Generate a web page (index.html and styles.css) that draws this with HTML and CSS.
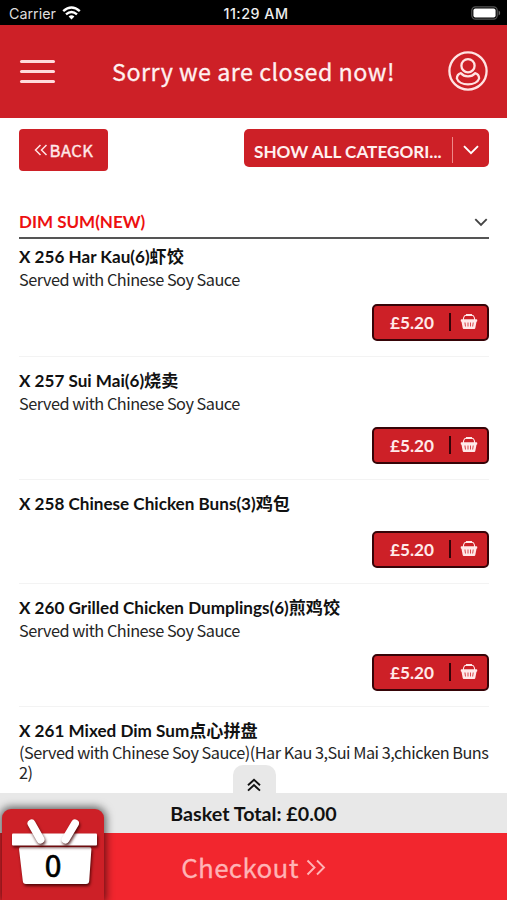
FILE: index.html
```html
<!DOCTYPE html>
<html lang="en">
<head>
<meta charset="utf-8">
<title>Menu</title>
<link rel="stylesheet" href="styles.css">
</head>
<body>
<svg class="defs" width="0" height="0">
  <symbol id="basket" viewBox="0 0 18 18">
    <path d="M3.500 7V5Q4 2.400 6.500 2h5Q14 2.400 14.500 5v2" fill="none" stroke="currentColor" stroke-width="1.100"/>
    <path d="M6 1h6v2H6z" fill="currentColor"/>
    <path fill-rule="evenodd" d="M1.500 6.300h15q.8 0 .8 1.200t-.8 1.200l-1.200 6.400q-.2.900-1 .9H3.700q-.8 0-1-.9L1.500 8.700q-.8 0-.8-1.200t.8-1.200zM4.500 9.500l.5 4h.8l-.4-4zM7.600 9.500v4h.8v-4zM10 9.500v4h.8v-4zM12.800 9.500l-.5 4h.8l.5-4z" fill="currentColor"/>
  </symbol>
</svg>
<div class="screen">
  <div class="status">
    <div class="carrier"><span>Carrier</span>
      <svg width="19" height="14" viewBox="0 0 19 14" fill="none" stroke="#fff" stroke-width="2.400"><path d="M1.200 5.200Q9.500-2.300 17.800 5.200"/><path d="M4 8.300q5.500-4.800 11 0"/><path d="M9.500 13.500 6.600 10.500q2.900-2.500 5.800 0z" fill="#fff" stroke="none"/></svg>
    </div>
    <div class="time">11:29 AM</div>
    <svg class="battery" width="30" height="14" viewBox="0 0 30 14"><rect x=".8" y=".8" width="25.400" height="12.400" rx="3.600" fill="none" stroke="#555" stroke-width="1.200"/><rect x="2.400" y="2.400" width="22.200" height="9.200" rx="2" fill="#fff"/><path d="M27.600 4.600q1.600.8 1.600 2.400t-1.600 2.400z" fill="#666"/></svg>
  </div>
  <header class="header">
    <div class="burger"><i></i><i></i><i></i></div>
    <h1 class="title">Sorry we are closed now!</h1>
    <svg class="user" width="40" height="40" viewBox="0 0 40 40" fill="none" stroke="#ffe3e3" stroke-width="2.300"><circle cx="20" cy="20" r="18.600"/><circle cx="20" cy="14.700" r="6.600"/><path d="M13 22.200C9.500 23.200 8.900 25.500 8.900 27.500 10 31.300 15 33.300 20 33.300s10-2 11.100-5.800c0-2-.6-4.300-4.100-5.300-1.700 2.200-4.300 3.100-7 3.100s-5.300-.9-7-3.100z" stroke-linejoin="round"/></svg>
  </header>
  <main class="main">
    <div class="toolbar">
      <div class="back"><svg width="14" height="12" viewBox="0 0 14 12" fill="none" stroke="#ffe3e3" stroke-width="1.500"><path d="M6.500 1 1.500 6l5 5M12.500 1l-5 5 5 5"/></svg><span>BACK</span></div>
      <div class="select"><span class="select-text">SHOW ALL CATEGORI...</span><svg class="select-arrow" width="16" height="10" viewBox="0 0 16 10" fill="none" stroke="#fff" stroke-width="1.900"><path d="M1 1.200l7 7 7-7"/></svg></div>
    </div>
    <div class="category"><span>DIM SUM(NEW)</span><svg width="14" height="9" viewBox="0 0 14 9" fill="none" stroke="#444" stroke-width="1.900"><path d="M1.300 1.200 7 6.900l5.700-5.700"/></svg></div>
    <section class="item first"><h2>X 256 Har Kau(6)虾饺</h2><p>Served with Chinese Soy Sauce</p><div class="price"><span>£5.20</span><svg class="basket"><use href="#basket"/></svg></div></section>
    <section class="item"><h2>X 257 Sui Mai(6)烧卖</h2><p>Served with Chinese Soy Sauce</p><div class="price"><span>£5.20</span><svg class="basket"><use href="#basket"/></svg></div></section>
    <section class="item"><h2>X 258 Chinese Chicken Buns(3)鸡包</h2><div class="price"><span>£5.20</span><svg class="basket"><use href="#basket"/></svg></div></section>
    <section class="item"><h2>X 260 Grilled Chicken Dumplings(6)煎鸡饺</h2><p>Served with Chinese Soy Sauce</p><div class="price"><span>£5.20</span><svg class="basket"><use href="#basket"/></svg></div></section>
    <section class="item last"><h2>X 261 Mixed Dim Sum点心拼盘</h2><p>(Served with Chinese Soy Sauce)(Har Kau 3,Sui Mai 3,chicken Buns 2)</p></section>
  </main>
  <footer class="footer">
    <div class="handle"><svg width="14" height="14" viewBox="0 0 14 14" fill="none" stroke="#111" stroke-width="1.900"><path d="M1 7.200l6-5.500 6 5.500M1 12.600l6-5.500 6 5.500"/></svg></div>
    <div class="total">Basket Total: £0.00</div>
    <div class="checkout"><span>Checkout</span><svg width="20" height="17" viewBox="0 0 20 17" fill="none" stroke="#ffb3b5" stroke-width="1.900"><path d="M1.500 1.500l7 7-7 7M11 1.500l7 7-7 7"/></svg></div>
    <div class="cart">
      <svg class="cart-art" width="102" height="92" viewBox="0 0 102 92">
        <path class="lift" fill="#fff" d="M20.500 38h69q2 0 1.900 2l-2.200 32q-.2 3-3.200 3H26q-3 0-3.200-3L19 40q0-2 1.500-2z"/>
        <rect class="lift" x="12" y="24.500" width="85" height="12" rx="1" fill="#fff"/>
        <path class="lift" stroke="#fff" stroke-width="8" stroke-linecap="round" d="M31.500 14.500l9 16"/>
        <path class="lift" stroke="#fff" stroke-width="8" stroke-linecap="round" d="M75 14.500l-9.500 16"/>
      </svg>
      <span class="count">0</span>
    </div>
  </footer>
</div>
</body>
</html>
```
FILE: styles.css
```css
* { box-sizing: border-box; }
body { margin: 0; background: #fff; font-family: Lato, "Noto Sans CJK SC", sans-serif; }
.defs { position: absolute; }
.screen { height: 900px; display: flex; flex-direction: column; overflow: hidden; position: relative; }
.status { height: 25px; flex: none; background: #000; color: #fff; display: grid; grid-template-columns: 1fr auto 1fr; align-items: center; padding: 1px 6px 0 9px; font-family: Inter, sans-serif; font-size: 14px; }
.carrier { display: flex; align-items: center; gap: 6px; color: #ddd; font-size: 14.300px; }
.time { font-weight: 500; font-size: 14.300px; letter-spacing: .5px; color: #eee; padding-left: 2px; }
.battery { justify-self: end; }
.header { height: 93px; flex: none; background: #cd2027; display: flex; align-items: center; justify-content: space-between; padding: 0 19px 2px 20px; }
.burger { width: 35px; display: flex; flex-direction: column; gap: 7px; margin-top: 2px; }
.burger i { height: 3px; border-radius: 2px; background: #ffdcdc; }
.title { margin: 0 0 0 4px; font: 400 23.300px/36px "Noto Sans CJK SC", sans-serif; letter-spacing: .480px; -webkit-text-stroke: .3px #fff0f0; color: #fff0f0; white-space: nowrap; }
.main { flex: 1; min-height: 0; overflow: hidden; padding: 11px 18px 0 19px; }
.toolbar { display: flex; justify-content: space-between; align-items: flex-start; height: 85px; }
.back { width: 89px; height: 42px; border-radius: 4px; background: #cd2027; color: #ffe8e8; display: flex; align-items: center; justify-content: center; gap: 2px; font: 400 16.500px/42px "Noto Sans CJK SC", sans-serif; letter-spacing: .5px; -webkit-text-stroke: .4px #ffe8e8; }
.select { width: 245px; height: 38px; border-radius: 5px; background: #cd2027; display: flex; align-items: center; padding: 0 10px; color: #fff0f0; font-size: 17.150px; font-weight: 700; }
.select-text { flex: 1; white-space: nowrap; padding-top: 6px; }
.select-arrow { box-sizing: content-box; padding: 8px 0 8px 10px; border-left: 1px solid #e88; margin-top: 4px; }
.category { height: 25px; border-bottom: 2px solid #555; display: flex; align-items: center; justify-content: space-between; color: #ed1010; font-size: 17px; font-weight: 700; line-height: 18px; padding-right: 1px; padding-bottom: 7px; }
.item { height: 123px; padding-top: 12px; border-bottom: 1px solid #f3f3f3; display: flex; flex-direction: column; }
.item.first { height: 118px; padding-top: 6px; }
.item:nth-of-type(3) { height: 104px; }
.item.last { height: 200px; }
h2 { margin: 0; font-size: 17.100px; line-height: 23px; font-weight: 700; color: #111; white-space: nowrap; }
p { margin: 1px 0 0; font: 400 16.300px/20px "Noto Sans CJK SC", sans-serif; letter-spacing: -.5px; color: #252525; }
.item.last p { line-height: 19.500px; }
.price { margin: auto 0 15px auto; width: 117px; height: 37px; border: 2px solid #360408; border-radius: 5px; background: #cd2027; color: #ffe9e9; display: flex; align-items: center; padding: 0 9px 1px 16px; font-size: 17.200px; font-weight: 700; }
.price span { flex: 1; }
.basket { box-sizing: content-box; width: 18px; height: 18px; padding-left: 9px; border-left: 2px solid #360408; }
.footer { flex: none; position: relative; }
.handle { position: absolute; left: 233px; top: -28px; width: 43px; height: 30px; border-radius: 10px 10px 0 0; background: #e8e8e8; display: flex; align-items: center; justify-content: center; padding: 9px 2px 0 0; }
.total { height: 40px; background: #e8e8e8; text-align: center; font-size: 19.700px; font-weight: 700; line-height: 42px; color: #111; }
.checkout { height: 67px; background: #f2262e; display: flex; align-items: center; justify-content: center; gap: 7px; padding-top: 1px; color: #ffb3b5; font: 400 26px/64px "Noto Sans CJK SC", sans-serif; letter-spacing: .300px; -webkit-text-stroke: .3px #ffb3b5; }
.cart { position: absolute; left: 2px; bottom: 0; width: 102px; height: 91px; border-radius: 9px 9px 0 0; background: #cd2027; box-shadow: 0 0 8px 2px rgba(0,0,0,.6); }
.cart-art { display: block; margin-left: -2px; }
.lift { filter: drop-shadow(1px 2px 1.500px rgba(60,0,0,.85)); }
.count { position: absolute; left: 0; right: 0; top: 35px; text-align: center; font: 400 30px/40px "Noto Sans CJK SC", sans-serif; -webkit-text-stroke: .7px #000; color: #000; }
```
